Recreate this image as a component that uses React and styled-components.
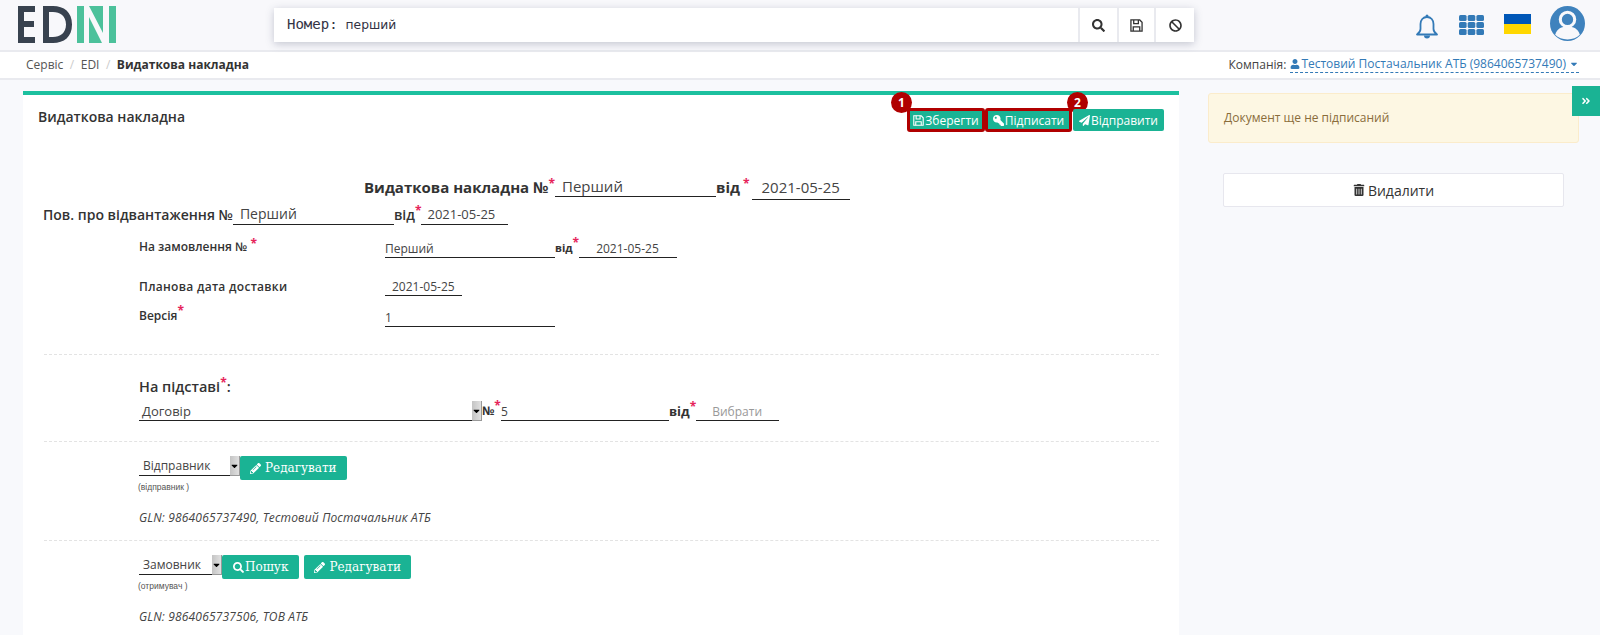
import React from "react";
import styled, { createGlobalStyle } from "styled-components";
import {
  FaSearch,
  FaUser,
  FaCaretDown,
  FaTrashAlt,
  FaPencilAlt,
  FaPaperPlane,
  FaKey,
  FaBan,
  FaAngleDoubleRight,
} from "react-icons/fa";

const teal = "#1ab394";

const GlobalStyle = createGlobalStyle`
  html, body {
    margin: 0;
    height: 635px;
    overflow: hidden;
    background: #f8f9fc;
    font-family: "Open Sans", sans-serif;
    font-size: 12px;
    color: #333;
  }
`;

const Page = styled.div`
  width: 1600px;
  height: 635px;
  overflow: hidden;
  position: relative;
`;

const Header = styled.header`
  height: 50px;
  display: flex;
  align-items: flex-start;
  border-bottom: 2px solid #e9eaef;
  background: #f8f8fb;
`;

const Logo = styled.svg`
  margin: 6px 0 0 18px;
  flex: none;
`;

const SearchBox = styled.div`
  margin: 8px 0 0 158px;
  width: 920px;
  height: 34px;
  display: flex;
  background: #fff;
  box-shadow: 0 2px 8px rgba(60, 70, 100, 0.28);
`;

const SearchText = styled.div`
  flex: 1;
  padding-left: 13px;
  line-height: 32px;
  font-family: "DejaVu Sans Mono", monospace;
  font-size: 14px;
  color: #334;
`;

const SearchValue = styled.span`
  margin-left: 8px;
  font-family: "DejaVu Sans", sans-serif;
  font-size: 12.300px;
`;

const SearchButton = styled.button`
  width: ${(p) => p.$w}px;
  border: 0;
  border-left: 2px solid #e9eaef;
  background: #fff;
  padding: 0;
  display: flex;
  align-items: center;
  justify-content: center;
  color: #333;
  font-size: 13px;
`;

const HeaderIcons = styled.div`
  margin-left: 221px;
  display: flex;
  align-items: flex-start;
`;

const BellIcon = styled.svg`
  margin-top: 14px;
  flex: none;
`;

const GridIcon = styled.svg`
  margin: 15px 0 0 20px;
  flex: none;
`;

const FlagIcon = styled.svg`
  margin: 14px 0 0 20px;
  flex: none;
`;

const AvatarIcon = styled.svg`
  margin: 6px 0 0 19px;
  flex: none;
`;

const Breadcrumb = styled.div`
  height: 24px;
  padding: 0 21px 2px 26px;
  display: flex;
  align-items: center;
  justify-content: space-between;
  background: #fff;
  border-bottom: 2px solid #e9eaef;
`;

const Crumbs = styled.div`
  display: flex;
  color: #555;
`;

const Sep = styled.span`
  color: #ccc;
  margin: 0 6.500px;
`;

const CurrentCrumb = styled.b`
  color: #333;
`;

const Company = styled.div`
  display: flex;
  align-items: center;
  gap: 4px;
  color: #444;
`;

const CompanyLink = styled.span`
  color: #337ab7;
  border-bottom: 1px dashed #337ab7;
  display: flex;
  align-items: center;
  gap: 1px;
`;

const CompanyCaret = styled(FaCaretDown)`
  margin-left: 2px;
`;

const Body = styled.div`
  display: flex;
  align-items: flex-start;
  padding: 11px 0 0 23px;
`;

const Card = styled.main`
  width: 1156px;
  height: 560px;
  flex: none;
  background: #fff;
  border-top: 4px solid #1cc09f;
  box-sizing: border-box;
`;

const CardHead = styled.div`
  height: 72px;
  box-sizing: border-box;
  display: flex;
  justify-content: space-between;
  padding: 14px 15px 0 15px;
`;

const CardTitle = styled.h2`
  margin: -1px 0 0;
  font-size: 14px;
  font-weight: 600;
  line-height: 17px;
  color: #333;
`;

const Actions = styled.div`
  display: flex;
  gap: 2px;
  height: 22px;
`;

const ActionButton = styled.button`
  position: relative;
  width: ${(p) => p.$w}px;
  height: 22px;
  box-sizing: border-box;
  padding: 0;
  display: flex;
  align-items: center;
  justify-content: center;
  gap: 1px;
  background: ${teal};
  color: #fff;
  font-family: "Open Sans", sans-serif;
  font-size: 12px;
  border-radius: 2px;
  border: 0;
  outline: ${(p) => (p.$marked ? "3px solid #b00000" : "none")};
  outline-offset: -2px;
  svg {
    font-size: 11px;
    flex: none;
  }
`;

const KeyGlyph = styled(FaKey)`
  transform: scaleX(-1);
`;

const Badge = styled.span`
  position: absolute;
  top: -17px;
  left: ${(p) => p.$left}px;
  width: 21px;
  height: 21px;
  border-radius: 50%;
  background: #b00000;
  color: #fff;
  font-weight: 700;
  font-size: 12px;
  line-height: 21px;
  text-align: center;
`;

const Row = styled.div`
  display: flex;
  align-items: flex-end;
  margin-left: ${(p) => p.$left || 0}px;
  height: ${(p) => p.$h}px;
`;

const ButtonRow = styled.div`
  display: flex;
  align-items: flex-start;
  margin: 14px 0 0 116px;
  height: 24px;
`;

const Req = styled.sup`
  color: #e6245a;
  font-size: 12px;
  font-weight: 700;
  line-height: 0;
  vertical-align: ${(p) => p.$v || "5px"};
  margin-left: ${(p) => p.$gap || 0}px;
`;

const BigLabel = styled.span`
  font-size: ${(p) => p.$size || 14}px;
  font-weight: ${(p) => p.$w || 600};
  color: #333;
  white-space: nowrap;
  line-height: 20px;
  flex: none;
`;

const FieldLabel = styled.span`
  font-size: 12px;
  font-weight: 600;
  color: #333;
  width: 246px;
  flex: none;
  align-self: flex-start;
  margin-top: ${(p) => p.$top}px;
  letter-spacing: ${(p) => p.$track || 0}px;
`;

const Field = styled.div`
  width: ${(p) => p.$w}px;
  flex: none;
  box-sizing: border-box;
  border-bottom: 1px solid #222;
  padding-left: ${(p) => p.$pad || 0}px;
  font-size: ${(p) => p.$size || 12}px;
  color: ${(p) => (p.$muted ? "#999" : "#444")};
  line-height: ${(p) => p.$lh || 17}px;
  margin-left: ${(p) => p.$left || 0}px;
  margin-bottom: ${(p) => p.$drop || 0}px;
`;

const Divider = styled.hr`
  margin: ${(p) => p.$top}px 0 0 21px;
  width: 1115px;
  border: 0;
  border-top: 1px dashed #e3e3e3;
`;

const Picker = styled.div`
  width: ${(p) => p.$w}px;
  height: 20px;
  flex: none;
  box-sizing: border-box;
  display: flex;
  justify-content: space-between;
  border-bottom: 1px solid #222;
  padding-left: ${(p) => p.$pad || 3}px;
  font-size: ${(p) => p.$size || 12}px;
  line-height: 20px;
  color: #444;
`;

const Arrow = styled.span`
  width: 10px;
  height: 20px;
  background: linear-gradient(to right, #c4c4c4, #e0e0e0);
  border-right: 1px solid #999;
  border-bottom: 1px solid #999;
  box-sizing: border-box;
  display: flex;
  justify-content: center;
  align-items: center;
  color: #000;
  font-size: 10px;
`;

const SerifButton = styled.button`
  height: 24px;
  box-sizing: border-box;
  padding: 0 ${(p) => p.$pad ?? 10}px;
  border: 0;
  border-radius: 2px;
  background: ${teal};
  color: #fff;
  display: flex;
  align-items: center;
  gap: ${(p) => p.$gap ?? 4}px;
  font-family: "DejaVu Serif", serif;
  font-size: 12px;
  flex: none;
  margin-left: ${(p) => p.$left || 0}px;
  svg {
    font-size: 11px;
  }
`;

const Role = styled.div`
  margin: 2px 0 0 115px;
  font-family: "Liberation Sans", sans-serif;
  font-size: 8.500px;
  line-height: 10px;
  color: #555;
`;

const Gln = styled.div`
  margin: 17px 0 0 116px;
  font-style: italic;
  font-size: 12px;
  letter-spacing: 0.16px;
  line-height: 17px;
  color: #444;
`;

const Side = styled.aside`
  width: 371px;
  margin-left: 29px;
  margin-top: 2px;
`;

const Alert = styled.div`
  height: 50px;
  box-sizing: border-box;
  padding: 0 15px;
  line-height: 48px;
  background: #fdf7e3;
  border: 1px solid #fbeccb;
  border-radius: 3px;
  color: #8a6d3b;
`;

const DeleteButton = styled.button`
  display: flex;
  width: 341px;
  height: 34px;
  margin: 30px 0 0 15px;
  align-items: center;
  justify-content: center;
  gap: 3px;
  background: #fff;
  border: 1px solid #e7e7ee;
  border-radius: 2px;
  font-family: "Open Sans", sans-serif;
  font-size: 14px;
  color: #333;
  svg {
    font-size: 12px;
  }
`;

const Toggle = styled.div`
  position: absolute;
  top: 86px;
  right: 0;
  width: 28px;
  height: 30px;
  background: ${teal};
  color: #fff;
  display: flex;
  align-items: center;
  justify-content: center;
  font-size: 10px;
`;

function FloppyIcon({ size = 13 }) {
  return (
    <svg width={size} height={size} viewBox="0 0 14 14" fill="none" stroke="currentColor" strokeWidth="1.400">
      <path d="M1 1h9.500L13 3.500V13H1z" />
      <path d="M4 1v4h5V1M3.500 13V8.500h7V13" />
    </svg>
  );
}

function App() {
  return (
    <Page>
      <GlobalStyle />
      <Header>
        <Logo width="98" height="37" viewBox="0 0 98 37">
          <path fill="#38424f" d="M0 0h17v6H6v9h10v6H6v10h11v6H0z" />
          <path fill="#38424f" fillRule="evenodd" d="M25 0h10c11 0 19 6 19 18.500S46 37 35 37H25zM31 6v25h4c7 0 13-4 13-12.500S42 6 35 6z" />
          <path fill="#4cc19b" d="M59 0h7v37h-7zM91 0h7v37h-7zM71 0h14v27zM71 11l13 26H71z" />
        </Logo>
        <SearchBox>
          <SearchText>Номер:<SearchValue>перший</SearchValue></SearchText>
          <SearchButton $w={39}><FaSearch /></SearchButton>
          <SearchButton $w={37}><FloppyIcon /></SearchButton>
          <SearchButton $w={40}><FaBan /></SearchButton>
        </SearchBox>
        <HeaderIcons>
          <BellIcon width="24" height="25" viewBox="0 0 24 25">
            <path d="M12 3C8 3 5.500 6 5.500 10v5c0 2.500-1.500 4-3.500 5.500h20c-2-1.500-3.500-3-3.500-5.500v-5C18.500 6 16 3 12 3z" fill="none" stroke="#337ab7" strokeWidth="1.800" strokeLinejoin="round" />
            <circle cx="12" cy="2" r="1.500" fill="#337ab7" />
            <path d="M9 21.500a3 3 0 0 0 6 0z" fill="#337ab7" />
          </BellIcon>
          <GridIcon width="25" height="20" viewBox="0 0 25 20" fill="#337ab7">
            {[0, 1, 2].flatMap((r) =>
              [0, 1, 2].map((c) => (
                <rect key={`${r}${c}`} x={c * 8.700} y={r * 7} width="7.600" height="6" rx="1.500" />
              ))
            )}
          </GridIcon>
          <FlagIcon width="27" height="20" viewBox="0 0 27 20">
            <rect width="27" height="10" fill="#0057b7" />
            <rect y="10" width="27" height="10" fill="#ffd700" />
          </FlagIcon>
          <AvatarIcon width="35" height="35" viewBox="0 0 34 34">
            <circle cx="17" cy="17" r="17" fill="#3f82bd" />
            <circle cx="17" cy="13" r="7" fill="none" stroke="#f8f8fb" strokeWidth="3" />
            <path d="M5 28c2-6 6-8 12-8s10 2 12 8c-3 3-7 4.500-12 4.500S8 31 5 28z" fill="#f8f8fb" />
          </AvatarIcon>
        </HeaderIcons>
      </Header>
      <Breadcrumb>
        <Crumbs>
          Сервіс<Sep>/</Sep>EDI<Sep>/</Sep>
          <CurrentCrumb>Видаткова накладна</CurrentCrumb>
        </Crumbs>
        <Company>
          Компанія:
          <CompanyLink>
            <FaUser size={10} /> Тестовий Постачальник АТБ (9864065737490) <CompanyCaret size={10} />
          </CompanyLink>
        </Company>
      </Breadcrumb>
      <Body>
        <Card>
          <CardHead>
            <CardTitle>Видаткова накладна</CardTitle>
            <Actions>
              <ActionButton $marked $w={76}>
                <Badge $left={-17}>1</Badge>
                <FloppyIcon size={11} />Зберегти
              </ActionButton>
              <ActionButton $marked $w={85}>
                <Badge $left={81}>2</Badge>
                <KeyGlyph />Підписати
              </ActionButton>
              <ActionButton $w={91}>
                <FaPaperPlane />Відправити
              </ActionButton>
            </Actions>
          </CardHead>
          <Row $left={341} $h={30}>
            <BigLabel $w={700} $size={15}>Видаткова накладна №<Req>*</Req></BigLabel>
            <Field $w={161} $pad={7} $size={15} $lh={20}>Перший</Field>
            <BigLabel $w={700} $size={15}>від<Req $gap={3}>*</Req></BigLabel>
            <Field $w={98} $pad={10} $size={15} $lh={23} $left={2} $drop={-3}>2021-05-25</Field>
          </Row>
          <Row $left={20} $h={28}>
            <BigLabel>Пов. про відвантаження №</BigLabel>
            <Field $w={161} $pad={7} $size={14} $lh={20}>Перший</Field>
            <BigLabel>від<Req>*</Req></BigLabel>
            <Field $w={87} $pad={6} $size={13} $lh={20}>2021-05-25</Field>
          </Row>
          <Row $left={116} $h={33}>
            <FieldLabel $top={13}>На замовлення № <Req $v="3px">*</Req></FieldLabel>
            <Field $w={170}>Перший</Field>
            <BigLabel $w={700} $size={11}>від<Req>*</Req></BigLabel>
            <Field $w={98} $pad={17}>2021-05-25</Field>
          </Row>
          <Row $left={116} $h={38}>
            <FieldLabel $top={20} $track={0.3}>Планова дата доставки</FieldLabel>
            <Field $w={77} $pad={7}>2021-05-25</Field>
          </Row>
          <Row $left={116} $h={31}>
            <FieldLabel $top={11}>Версія<Req>*</Req></FieldLabel>
            <Field $w={170}>1</Field>
          </Row>
          <Divider $top={27} />
          <Row $left={116} $h={42}>
            <BigLabel $size={14.500}>На підставі<Req>*</Req>:</BigLabel>
          </Row>
          <Row $left={116} $h={24}>
            <Picker $w={343} $size={13}>Договір<Arrow><FaCaretDown /></Arrow></Picker>
            <BigLabel $w={700} $size={12}>№<Req>*</Req></BigLabel>
            <Field $w={168}>5</Field>
            <BigLabel $w={700} $size={13}>від<Req>*</Req></BigLabel>
            <Field $w={83} $pad={16} $muted>Вибрати</Field>
          </Row>
          <Divider $top={20} />
          <ButtonRow>
            <Picker $w={101} $pad={4}>Відправник<Arrow><FaCaretDown /></Arrow></Picker>
            <SerifButton><FaPencilAlt />Редагувати</SerifButton>
          </ButtonRow>
          <Role>(відправник )</Role>
          <Gln>GLN: 9864065737490, Тестовий Постачальник АТБ</Gln>
          <Divider $top={14} />
          <ButtonRow>
            <Picker $w={83} $pad={4}>Замовник<Arrow><FaCaretDown /></Arrow></Picker>
            <SerifButton $gap={1} $pad={11}><FaSearch />Пошук</SerifButton>
            <SerifButton $left={5}><FaPencilAlt />Редагувати</SerifButton>
          </ButtonRow>
          <Role>(отримувач )</Role>
          <Gln>GLN: 9864065737506, ТОВ АТБ</Gln>
        </Card>
        <Side>
          <Alert>Документ ще не підписаний</Alert>
          <DeleteButton><FaTrashAlt />Видалити</DeleteButton>
        </Side>
      </Body>
      <Toggle><FaAngleDoubleRight /></Toggle>
    </Page>
  );
}

export default App;
